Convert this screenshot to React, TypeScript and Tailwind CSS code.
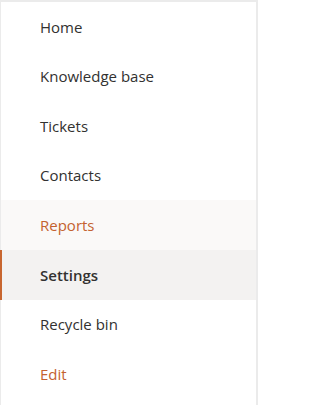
import React from "react";

const items: { label: string; state?: "hover" | "active" | "link" }[] = [
  { label: "Home" },
  { label: "Knowledge base" },
  { label: "Tickets" },
  { label: "Contacts" },
  { label: "Reports", state: "hover" },
  { label: "Settings", state: "active" },
  { label: "Recycle bin" },
  { label: "Edit", state: "link" },
];

export default function App() {
  return (
    <div
      className="w-[258px] h-[405px] bg-[#ebebeb] pt-[2px] pl-[1px] pr-[2px]"
      style={{ fontFamily: '"Open Sans", "Noto Sans", sans-serif' }}
    >
      <nav className="h-full bg-white flex flex-col">
        {items.map((it) => {
          let cls = "h-[49.6px] flex items-center pl-[39px] text-[15px] relative ";
          if (it.state === "hover") cls += "bg-[#faf9f8] text-[#c4622f]";
          else if (it.state === "active") cls += "bg-[#f3f2f1] text-[#323130] font-semibold";
          else if (it.state === "link") cls += "text-[#c4622f]";
          else cls += "text-[#323130]";
          return (
            <div key={it.label} className={cls}>
              {it.state === "active" && (
                <span className="absolute left-[-1px] top-0 bottom-0 w-[2px] bg-[#c8662f]" />
              )}
              {it.label}
            </div>
          );
        })}
      </nav>
    </div>
  );
}
